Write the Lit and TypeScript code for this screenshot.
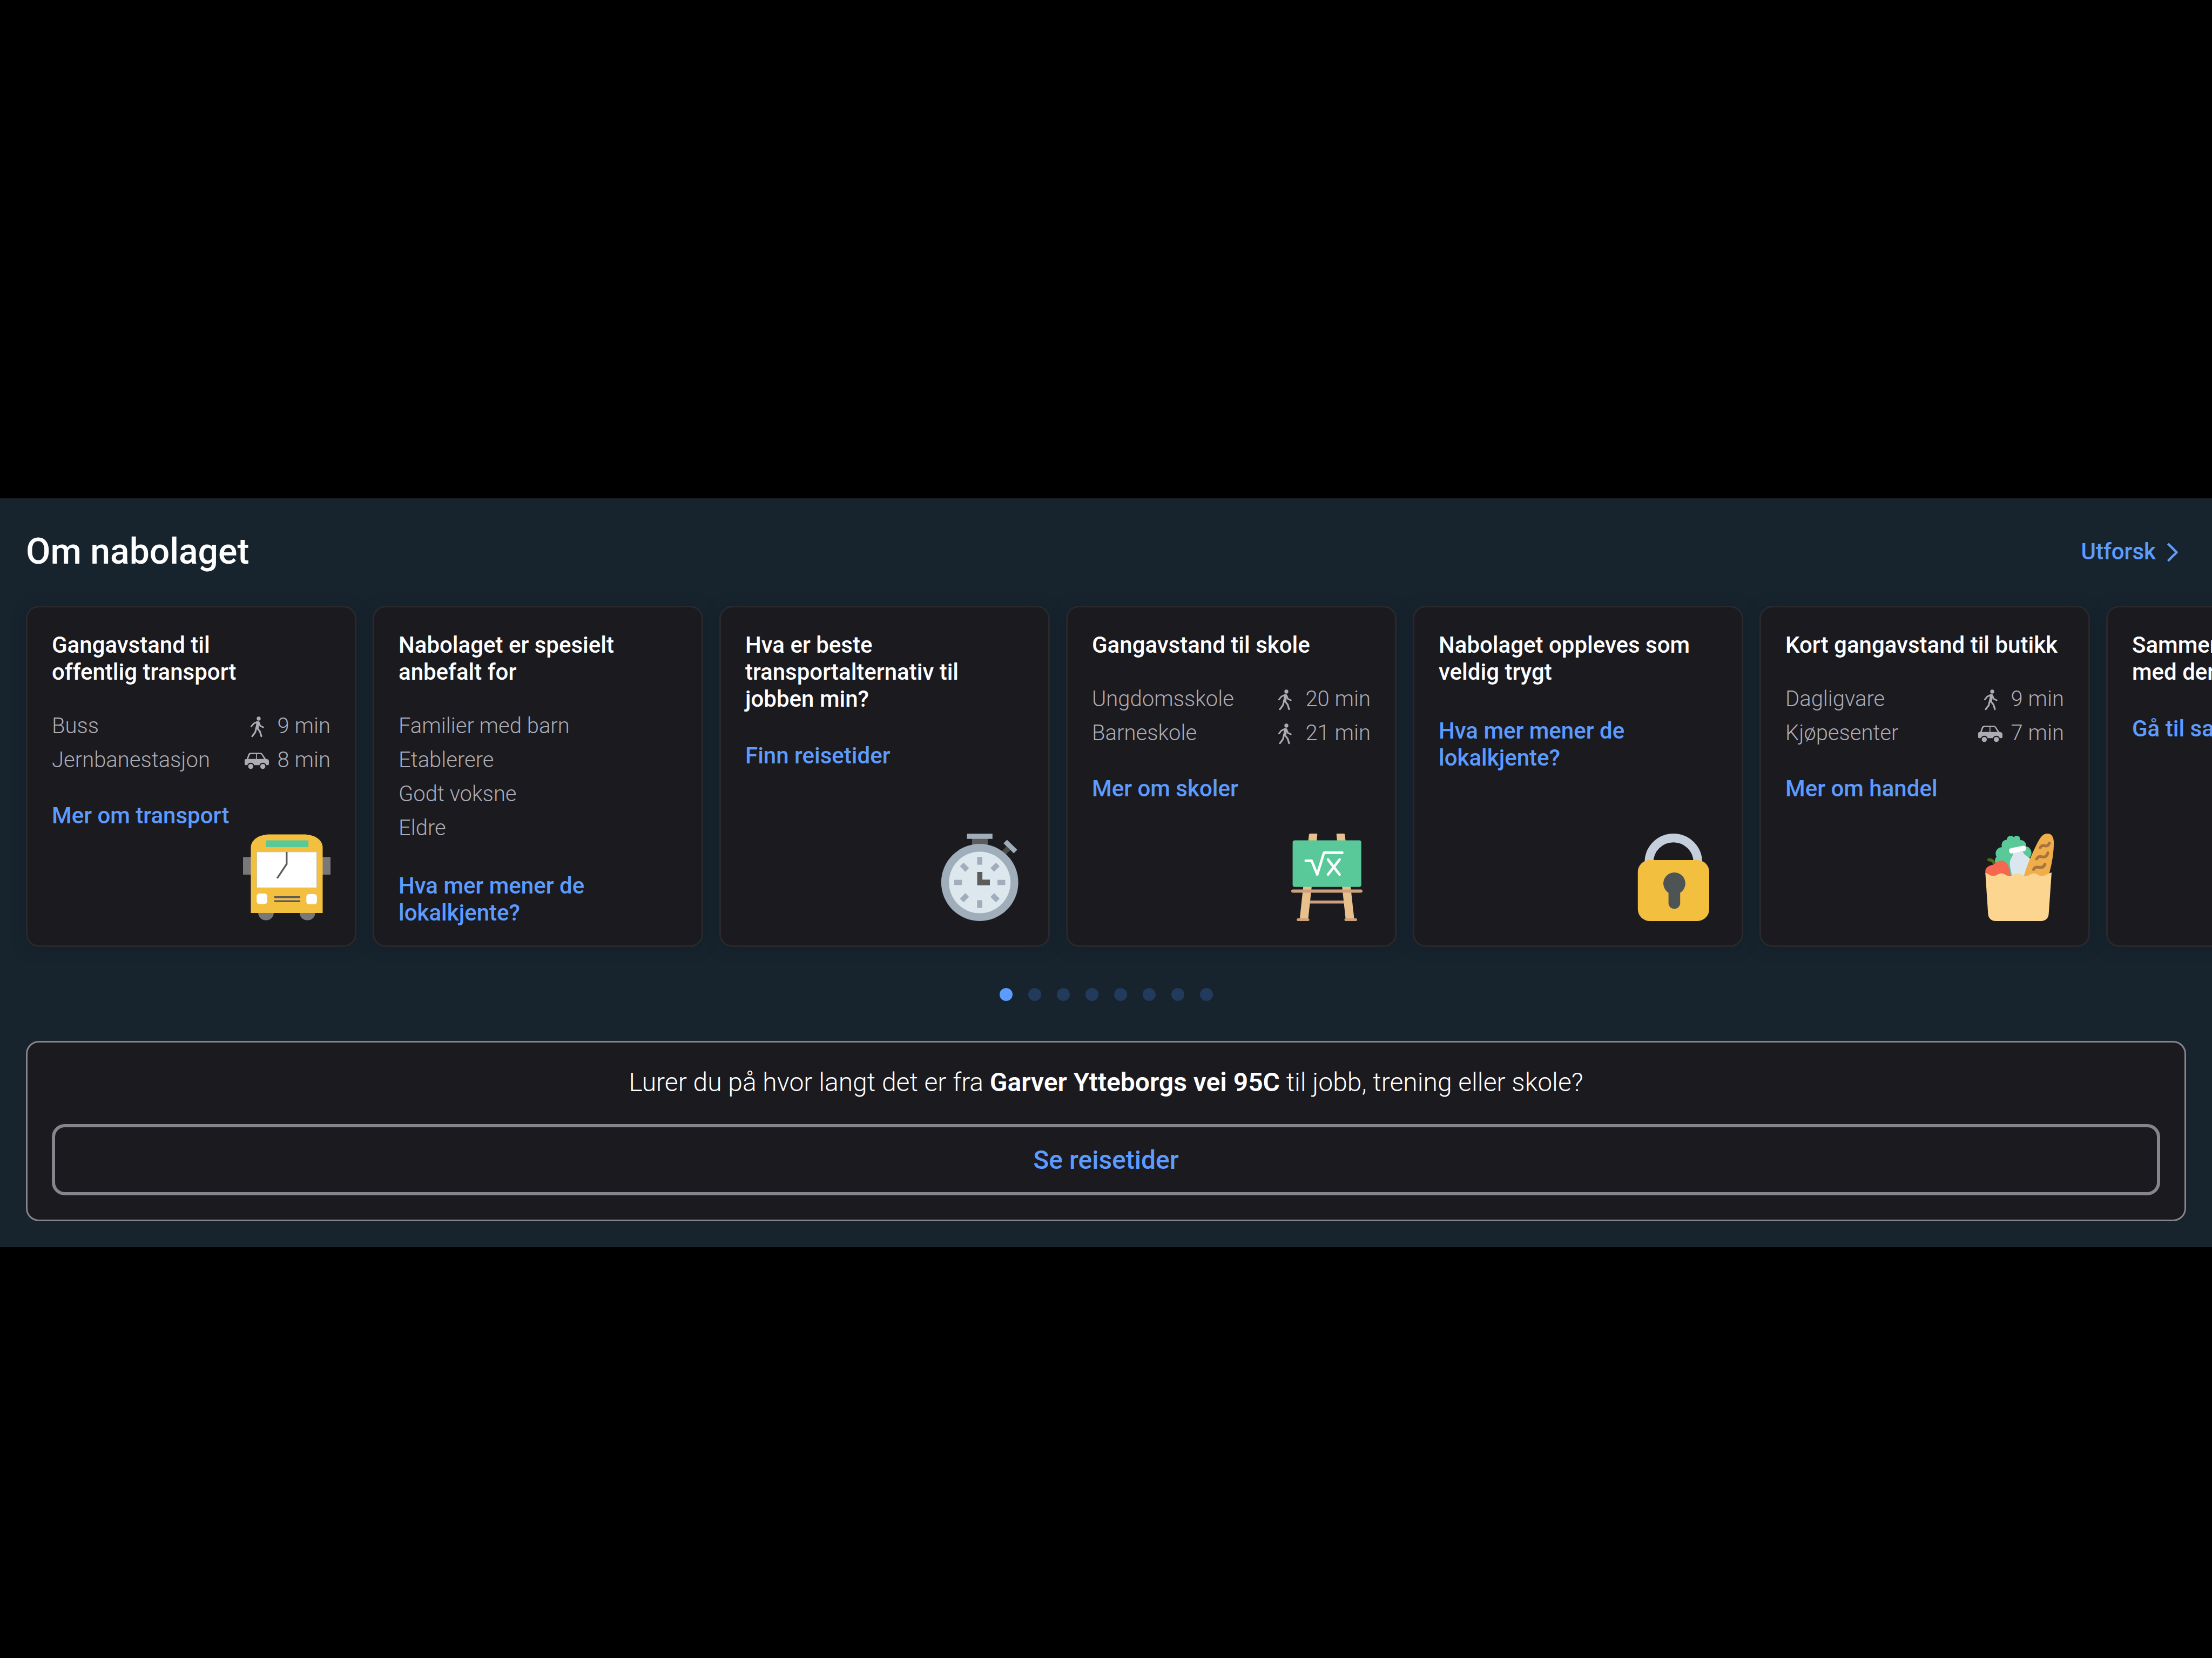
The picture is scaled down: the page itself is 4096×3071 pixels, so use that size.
import { LitElement, html, css, svg, nothing } from "lit";
import type { TemplateResult } from "lit";
import { customElement, property, state } from "lit/decorators.js";
import { classMap } from "lit/directives/class-map.js";

type Travel = "walk" | "car";

interface Fact {
  label: string;
  travel?: Travel;
  time?: string;
}

interface Card {
  title: string[];
  facts: Fact[];
  link: string[];
  art?: TemplateResult;
}

const bus = html`<svg viewBox="0 0 162 162" aria-hidden="true">
  <path fill="#787878" d="M0 43.6h162V76H0z" />
  <rect x="28" y="128" width="29" height="32.5" rx="14" fill="#787878" />
  <rect x="104.800" y="128" width="29" height="32.5" rx="14" fill="#787878" />
  <path fill="#f3bf3f" d="M14.500 147V26C14.500 11 30 1.500 50 1.500H112C132 1.500 147.500 11 147.500 26V147Z" />
  <path fill="#5ac99a" d="M42.900 12.600h78.200v12.400H42.900z" />
  <path fill="#fff" stroke="#c9c4b8" stroke-width="1" d="M25.500 34h110.800v66.300H25.500z" />
  <path fill="none" stroke="#5c5c5a" stroke-width="3.300" d="M80.800 34V56.500L63.200 82.800" />
  <rect x="25.300" y="111" width="19.500" height="19.500" rx="5" fill="#fff" />
  <rect x="117.300" y="112" width="19.500" height="19" rx="5" fill="#fff" />
  <path stroke="#5c5c5a" stroke-width="3.500" d="M58 117.700h48M58 125.300h48" />
</svg>`;

const stopwatch = html`<svg viewBox="0 0 162 162" aria-hidden="true">
  <path fill="#5c5c5a" d="M66 8h29v16H66z" />
  <path fill="#a0adbb" d="M56.500.200h47.300v9.500H56.500z" />
  <path fill="#484846" d="M129.800 23.600L137 30.600L128 39.500L120.500 33.400z" />
  <path fill="#a0adbb" d="M130.700 11.600L149.700 30L143.200 36.500L124.200 18.100z" />
  <circle cx="80.200" cy="90.500" r="71.400" fill="#a0adbb" />
  <circle cx="80.200" cy="90.500" r="57" fill="#dce8ed" />
  ${[0, 45, 90, 135, 180, 225, 270, 315].map(
    (a) => svg`<rect x="75.400" y="43.300" width="9.600" height="14.300" fill="#a0adbb" transform="rotate(${a} 80.200 90.500)" />`
  )}
  <path fill="#5c5c5a" d="M75.500 71h9.600v14.300H99v10.400H75.500z" />
</svg>`;

const easel = html`<svg viewBox="0 0 162 162" aria-hidden="true">
  <path fill="#cda17c" d="M46 124h70v5.500H46z" />
  <path fill="#e8c08c" d="M50 0H62Q63.500 0 63.300 2L46.300 159H30.600L47.800 2Q48 0 50 0ZM100.500 0H112.500Q114 0 114.300 2L131.700 159H115.800L98.700 2Q98.500 0 100.500 0Z" />
  <rect x="17.600" y="12.600" width="127.100" height="86.100" rx="4" fill="#5ac99a" />
  <rect x="15" y="103.600" width="132" height="6" rx="3" fill="#cda17c" />
  <rect x="25" y="157" width="23.500" height="5" rx="2.500" fill="#cda17c" />
  <rect x="113.500" y="157" width="23.500" height="5" rx="2.500" fill="#cda17c" />
  <path fill="none" stroke="#fff" stroke-width="4.600" stroke-linecap="round" stroke-linejoin="round" d="M41.800 50.400H52.800L63.200 75.800L75.600 35.400H109.600M83 48L104.600 76M104.600 48L83 76" />
</svg>`;

const padlock = html`<svg viewBox="0 0 162 162" aria-hidden="true">
  <path fill="none" stroke="#c5cfdb" stroke-width="16.200" d="M35.500 60V53.300A45.200 45.200 0 0 1 125.900 53.300V60" />
  <rect x="14.800" y="49" width="132.200" height="113" rx="22" fill="#f3bf3f" />
  <circle cx="82.400" cy="92.300" r="20.400" fill="#4e5354" />
  <path fill="#4e5354" d="M71.600 100H93.200V128.500A10.800 10.800 0 0 1 71.600 128.500Z" />
</svg>`;

const groceries = html`<svg viewBox="0 45 486 486" aria-hidden="true">
  <g fill="#5ac99a">
    <circle cx="190" cy="79" r="22" />
    <circle cx="223" cy="77" r="20" />
    <circle cx="169" cy="109" r="30" />
    <circle cx="246" cy="111" r="30" />
    <circle cx="141" cy="156" r="35" />
    <circle cx="128" cy="194" r="26" />
    <circle cx="268" cy="152" r="37" />
    <path d="M150 90H250L290 180L262 285H160L110 210Z" />
  </g>
  <path fill="none" stroke="#4a7019" stroke-width="17" stroke-linecap="round" d="M69 190Q92 191 99 212" />
  <path fill="#f5674e" d="M49 270V252C50 234 68 223 88 219C106 214 114 195 138 195C167 195 188 232 190 285L120 300Z" />
  <path fill="#dbe6ee" d="M203 150C206 172 183 182 185 214C187 240 194 260 198 290H270L310 200L296 183C282 170 263 166 258 145Z" />
  <rect x="180" y="119" width="96" height="30" rx="13" fill="#fff" transform="rotate(-11 228 134)" />
  <path fill="#efae4a" d="M260 290C278 232 288 202 306 164C324 126 338 94 354 70C367 51 380 45 394 45C416 45 428 62 429 90C430 150 420 210 398 290Z" />
  <path fill="none" stroke="#a8733f" stroke-width="16" stroke-linecap="round" d="M354 123C362 108 371 111 381 113C393 115 399 112 404 98M334 186C343 170 352 172 363 174C381 178 391 172 396 152M317 244C325 228 335 231 346 232C363 236 374 230 380 215" />
  <path fill="#fcd591" d="M49 264C66 268 75 280 93 280C112 280 120 266 138 266C156 266 166 281 184 281C202 281 210 266 228 266C247 266 256 281 274 281C292 281 300 266 318 266C337 266 345 281 363 281C382 281 392 268 417 261L401 490C400 515 383 531 358 531H106C82 531 65 515 64 490Z" />
</svg>`;

const walkIcon = html`<svg viewBox="30 32 144 144" role="img" aria-label="Gange">
  <circle cx="111" cy="62" r="11" fill="currentColor" />
  <path fill="currentColor" d="M97 78C103 75 114 76 116 82L112 105L110 119L92 122L97 96Z" />
  <path fill="none" stroke="currentColor" stroke-width="8.500" stroke-linecap="round" stroke-linejoin="round" d="M102 81L84 89L70 106M112 84L120 103L136 110" />
  <path fill="none" stroke="currentColor" stroke-width="9.500" stroke-linecap="round" stroke-linejoin="round" d="M98 112L92 138L75 160M103 115L118 134L126 160" />
</svg>`;

const carIcon = html`<svg viewBox="30 221 144 144" role="img" aria-label="Bil">
  <path fill="currentColor" fill-rule="evenodd" d="M33 294Q33 287 40 287H44L53 262Q57 252 67 252H119Q128 252 133 259L151 286L160 288Q168 290 168 298V314Q168 321 161 321H153A20 20 0 0 0 115 321H86A20 20 0 0 0 48 321H39Q33 321 33 315ZM69 259Q63 259 61 264L53 286H96V259ZM101 259V286H141L127 263Q124 259 119 259Z" />
  <circle cx="67" cy="328" r="14" fill="currentColor" />
  <circle cx="134" cy="328" r="14" fill="currentColor" />
</svg>`;

const CARDS: Card[] = [
  {
    title: ["Gangavstand til", "offentlig transport"],
    facts: [
      { label: "Buss", travel: "walk", time: "9 min" },
      { label: "Jernbanestasjon", travel: "car", time: "8 min" },
    ],
    link: ["Mer om transport"],
    art: bus,
  },
  {
    title: ["Nabolaget er spesielt", "anbefalt for"],
    facts: [{ label: "Familier med barn" }, { label: "Etablerere" }, { label: "Godt voksne" }, { label: "Eldre" }],
    link: ["Hva mer mener de", "lokalkjente?"],
  },
  {
    title: ["Hva er beste", "transportalternativ til", "jobben min?"],
    facts: [],
    link: ["Finn reisetider"],
    art: stopwatch,
  },
  {
    title: ["Gangavstand til skole"],
    facts: [
      { label: "Ungdomsskole", travel: "walk", time: "20 min" },
      { label: "Barneskole", travel: "walk", time: "21 min" },
    ],
    link: ["Mer om skoler"],
    art: easel,
  },
  {
    title: ["Nabolaget oppleves som", "veldig trygt"],
    facts: [],
    link: ["Hva mer mener de", "lokalkjente?"],
    art: padlock,
  },
  {
    title: ["Kort gangavstand til butikk"],
    facts: [
      { label: "Dagligvare", travel: "walk", time: "9 min" },
      { label: "Kjøpesenter", travel: "car", time: "7 min" },
    ],
    link: ["Mer om handel"],
    art: groceries,
  },
  {
    title: ["Sammenlign området", "med der du bor"],
    facts: [],
    link: ["Gå til sammenligning"],
  },
];

const lines = (parts: string[]) => parts.map((p, i) => (i ? html`<br />${p}` : p));

@customElement("neighbourhood-card")
export class NeighbourhoodCard extends LitElement {
  @property({ attribute: false }) card!: Card;

  static styles = css`
    :host {
      display: flex;
      flex-direction: column;
      box-sizing: border-box;
      padding: 45px 45px 35px;
      border: 3px solid #29292d;
      border-radius: 24px;
      background: #1b1a1f;
      box-shadow: 0 3px 24px rgba(16, 28, 38, 0.5);
      white-space: nowrap;
    }
    .title {
      margin: 0;
      color: #fff;
      font-size: 42px;
      font-weight: 500;
      line-height: 50px;
    }
    .facts {
      list-style: none;
      margin: 43px 0 0;
      padding: 0;
    }
    .fact {
      display: flex;
      align-items: center;
      justify-content: space-between;
      color: #adacb5;
      font-size: 40px;
      font-weight: 300;
      line-height: 63px;
    }
    .time {
      display: flex;
      align-items: center;
      gap: 14px;
    }
    .time svg {
      width: 48px;
      height: 48px;
    }
    .link {
      align-self: flex-start;
      margin-top: 55px;
      color: #5c9bff;
      font-size: 42px;
      font-weight: 500;
      line-height: 50px;
      text-decoration: none;
    }
    .facts + .link {
      margin-top: 47px;
    }
    .link.tall {
      padding-top: 4px;
    }
    .art {
      align-self: flex-end;
      margin: auto 0 10px;
    }
    .art svg {
      display: block;
      width: 162px;
      height: 162px;
    }
  `;

  render() {
    const { title, facts, link, art } = this.card;
    return html`
      <h3 class="title">${lines(title)}</h3>
      ${facts.length
        ? html`<ul class="facts">
            ${facts.map(
              (f) => html`<li class="fact">
                <span>${f.label}</span>
                ${f.time
                  ? html`<span class="time">${f.travel === "walk" ? walkIcon : carIcon}<span>${f.time}</span></span>`
                  : nothing}
              </li>`
            )}
          </ul>`
        : nothing}
      <a class=${classMap({ link: true, tall: link.length > 1 })} href="#">${lines(link)}</a>
      ${art ? html`<div class="art">${art}</div>` : nothing}
    `;
  }
}

@customElement("app-root")
export class AppRoot extends LitElement {
  @state() private page = 0;

  static styles = css`
    :host {
      display: grid;
      grid-template-rows: 923fr auto 761fr;
      grid-template-columns: minmax(0, 1fr);
      min-height: 100vh;
      background: #000;
      font-family: Roboto, "Liberation Sans", sans-serif;
    }
    .section {
      grid-row: 2;
      padding: 59px 48px 48px;
      background: #17242e;
      overflow: hidden;
    }
    .header {
      display: flex;
      align-items: center;
      justify-content: space-between;
      margin-bottom: 60px;
    }
    .heading {
      margin: 0;
      color: #fff;
      font-size: 66px;
      font-weight: 500;
      line-height: 80px;
    }
    .explore {
      display: flex;
      align-items: center;
      gap: 8px;
      color: #5c9bff;
      font-size: 42px;
      font-weight: 500;
      line-height: 50px;
      text-decoration: none;
    }
    .explore svg {
      width: 48px;
      height: 48px;
    }
    .track {
      display: flex;
      gap: 30px;
    }
    .track neighbourhood-card {
      flex: 0 0 612px;
    }
    .dots {
      display: flex;
      justify-content: center;
      gap: 29px;
      margin: 76px 0 74px;
    }
    .dot {
      width: 24px;
      height: 24px;
      padding: 0;
      border: 0;
      border-radius: 50%;
      background: #223a5b;
    }
    .dot.active {
      background: #5c9bff;
    }
    .travel {
      display: flex;
      flex-direction: column;
      gap: 48px;
      padding: 45px;
      border: 3px solid #86858e;
      border-radius: 24px;
      background: #1b1a1f;
    }
    .question {
      margin: 0;
      color: #fff;
      font-size: 48px;
      font-weight: 300;
      line-height: 58px;
      text-align: center;
    }
    .address {
      font-weight: 600;
    }
    .action {
      height: 132px;
      padding: 0;
      border: 6px solid #86858e;
      border-radius: 24px;
      background: transparent;
      color: #5c9bff;
      font-family: inherit;
      font-size: 48px;
      font-weight: 500;
    }
  `;

  render() {
    return html`
      <section class="section" aria-labelledby="heading">
        <header class="header">
          <h2 class="heading" id="heading">Om nabolaget</h2>
          <a class="explore" href="#"
            >Utforsk<svg viewBox="0 0 48 48" aria-hidden="true">
              <path fill="none" stroke="currentColor" stroke-width="4.500" stroke-linejoin="round" d="M14.500 9L30.500 25L14.500 41" />
            </svg>
          </a>
        </header>
        <div class="track">${CARDS.map((card) => html`<neighbourhood-card .card=${card}></neighbourhood-card>`)}</div>
        <nav class="dots">
          ${Array.from({ length: 8 }, (_, i) => html`<button
            class=${classMap({ dot: true, active: i === this.page })}
            aria-label=${`Side ${i + 1}`}
            @click=${() => (this.page = i)}
          ></button>`)}
        </nav>
        <div class="travel">
          <p class="question">
            Lurer du på hvor langt det er fra <strong class="address">Garver Ytteborgs vei 95C</strong> til jobb, trening eller skole?
          </p>
          <button class="action" type="button">Se reisetider</button>
        </div>
      </section>
    `;
  }
}
